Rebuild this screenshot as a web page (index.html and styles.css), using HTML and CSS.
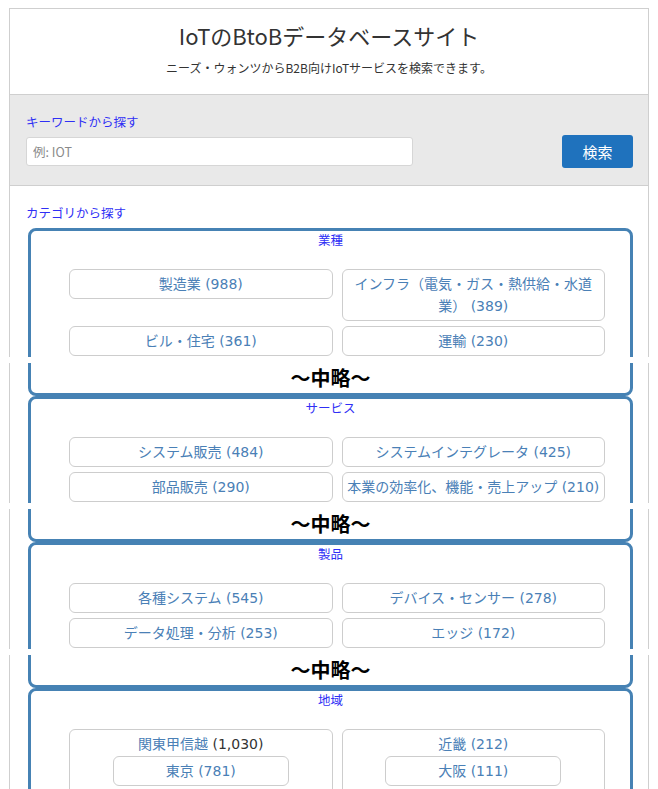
FILE: index.html
```html
<!DOCTYPE html>
<html lang="ja">
<head>
<meta charset="utf-8">
<title>IoTのBtoBデータベースサイト</title>
<link rel="stylesheet" href="styles.css">
</head>
<body>
<div class="page">
  <header class="site-header">
    <h1 class="site-title">IoTのBtoBデータベースサイト</h1>
    <p class="site-lead">ニーズ・ウォンツからB2B向けIoTサービスを検索できます。</p>
  </header>

  <section class="search">
    <h2 class="section-label">キーワードから探す</h2>
    <form class="search-row">
      <input class="search-input" type="text" placeholder="例: IOT">
      <button class="search-btn" type="button">検索</button>
    </form>
  </section>

  <section class="categories">
    <h2 class="section-label">カテゴリから探す</h2>

    <div class="cat-box">
      <h3 class="cat-title">業種</h3>
      <ul class="cat-list">
        <li><a class="cat-btn">製造業 (988)</a></li>
        <li><a class="cat-btn">インフラ（電気・ガス・熱供給・水道業） (389)</a></li>
        <li><a class="cat-btn">ビル・住宅 (361)</a></li>
        <li><a class="cat-btn">運輸 (230)</a></li>
      </ul>
      <div class="cut"></div>
      <p class="omit">～中略～</p>
    </div>

    <div class="cat-box">
      <h3 class="cat-title">サービス</h3>
      <ul class="cat-list">
        <li><a class="cat-btn">システム販売 (484)</a></li>
        <li><a class="cat-btn">システムインテグレータ (425)</a></li>
        <li><a class="cat-btn">部品販売 (290)</a></li>
        <li><a class="cat-btn">本業の効率化、機能・売上アップ (210)</a></li>
      </ul>
      <div class="cut"></div>
      <p class="omit">～中略～</p>
    </div>

    <div class="cat-box">
      <h3 class="cat-title">製品</h3>
      <ul class="cat-list">
        <li><a class="cat-btn">各種システム (545)</a></li>
        <li><a class="cat-btn">デバイス・センサー (278)</a></li>
        <li><a class="cat-btn">データ処理・分析 (253)</a></li>
        <li><a class="cat-btn">エッジ (172)</a></li>
      </ul>
      <div class="cut"></div>
      <p class="omit">～中略～</p>
    </div>

    <div class="cat-box">
      <h3 class="cat-title">地域</h3>
      <ul class="cat-list">
        <li class="region">
          <div class="region-head"><a class="region-name">関東甲信越</a> <span class="region-count">(1,030)</span></div>
          <ul class="sub-list">
            <li><a class="cat-btn">東京 (781)</a></li>
          </ul>
        </li>
        <li class="region">
          <div class="region-head"><a class="region-name">近畿 (212)</a></div>
          <ul class="sub-list">
            <li><a class="cat-btn">大阪 (111)</a></li>
          </ul>
        </li>
      </ul>
    </div>
  </section>
</div>
</body>
</html>
```

FILE: styles.css
```css
* {
  box-sizing: border-box;
}

html, body {
  background: #fff;
}

body {
  margin: 8px 9px 0;
  font-family: "Noto Sans CJK JP", "Noto Sans", sans-serif;
  color: #333;
}

.page {
  width: 640px;
}

/* header */
.site-header {
  border: 1px solid #cfcfcf;
  padding: 11px 0 17px;
  text-align: center;
}

.site-title {
  margin: 0;
  font-size: 22px;
  line-height: 30px;
  font-weight: normal;
  color: #333;
}

.site-lead {
  margin: 9px 0 0;
  font-size: 12px;
  line-height: 18px;
  color: #333;
}

/* labels */
.section-label {
  margin: 0;
  font-size: 12.5px;
  line-height: 18px;
  font-weight: normal;
  color: #2f2ff5;
}

/* search */
.search {
  background: #e9e9e9;
  border: 1px solid #cfcfcf;
  border-top: 0;
  padding: 18px 15px 17px 16px;
}

.search-row {
  margin: 4px 0 0;
  display: flex;
  align-items: center;
  justify-content: space-between;
}

.search-input {
  width: 387px;
  height: 29px;
  border: 1px solid #d6d6d6;
  border-radius: 3px;
  background: #fff;
  padding: 0 6px;
  font-family: "Noto Sans CJK JP", sans-serif;
  font-size: 12.5px;
  color: #333;
}

.search-input::placeholder {
  color: #8a8a8a;
}

.search-btn {
  width: 71px;
  height: 33px;
  border: 0;
  border-radius: 3px;
  background: #1f72bd;
  color: #fff;
  font-family: "Noto Sans CJK JP", sans-serif;
  font-size: 15px;
}

/* categories */
.categories {
  border: 1px solid #cfcfcf;
  border-top: 0;
  padding: 18px 15px 0 16px;
}

.categories > .section-label {
  margin-bottom: 6px;
}

.cat-box {
  margin-left: 2px;
  border: 3px solid #4682b4;
  border-radius: 8px;
}

.cat-title {
  margin: 0;
  font-size: 12.5px;
  line-height: 18px;
  font-weight: normal;
  text-align: center;
  color: #2f2ff5;
}

.cat-list {
  list-style: none;
  margin: 20px 0 0;
  padding: 0 25px 1px 38px;
  display: grid;
  grid-template-columns: 1fr 1fr;
  column-gap: 9px;
  row-gap: 5px;
  align-items: start;
}

.cat-btn {
  display: block;
  border: 1px solid #cdcdcd;
  border-radius: 6px;
  padding: 3px 3px;
  line-height: 22px;
  text-align: center;
  font-family: "DejaVu Sans", "Noto Sans CJK JP", sans-serif;
  font-size: 14px;
  color: #4a80b6;
}

.cut {
  height: 6px;
  margin: 0 -29px 0 -31px;
  background: #fff;
}

.omit {
  margin: 0;
  text-align: center;
  font-size: 20px;
  line-height: 30px;
  font-weight: bold;
  color: #000;
}

/* regions */
.region {
  border: 1px solid #cdcdcd;
  border-radius: 6px;
  padding: 3px 0 30px;
  text-align: center;
}

.region-head {
  line-height: 22px;
  font-family: "DejaVu Sans", "Noto Sans CJK JP", sans-serif;
  font-size: 14px;
}

.region-name {
  color: #4a80b6;
}

.region-count {
  color: #333;
}

.sub-list {
  list-style: none;
  margin: 1px auto 0;
  padding: 0;
  width: 176px;
}
```
